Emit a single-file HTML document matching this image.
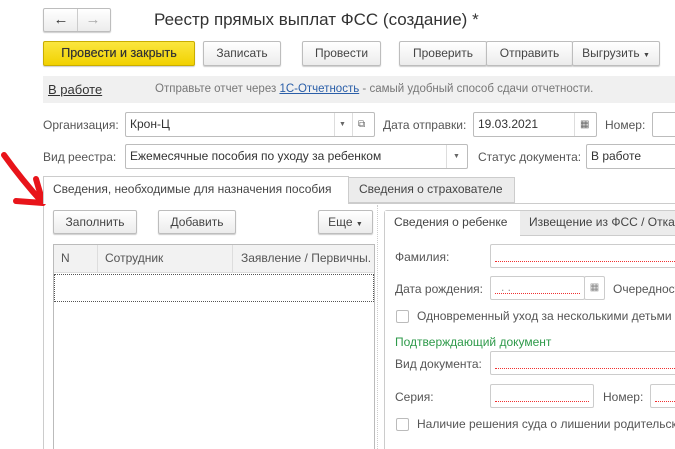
<!DOCTYPE html><html><head><meta charset="utf-8"><style>
*{box-sizing:border-box;margin:0;padding:0}
html,body{width:675px;height:449px;overflow:hidden}
body{background:#fff;font-family:"Liberation Sans",sans-serif;font-size:12px;color:#333;position:relative}
.a{position:absolute;white-space:nowrap}
.btn{position:absolute;border:1px solid #bdbdbd;border-radius:2px;background:linear-gradient(#fff,#ececec);box-shadow:0 1px 1px #ccc;text-align:center;line-height:22px;color:#444}
.inp{position:absolute;border:1px solid #bcbcbc;border-radius:2px;background:#fff;height:25px;line-height:23px;padding-left:4px;color:#333}
.req{position:absolute;border:1px solid #ccc;border-radius:2px;background:#fff;height:24px}
.req:after{content:"";position:absolute;left:4px;right:4px;bottom:5px;border-bottom:1px dotted #f03030}
.lbl{position:absolute;color:#555;white-space:nowrap}
.cb{position:absolute;width:13px;height:13px;border:1px solid #bbb;border-radius:2px;background:#fff}
</style></head><body>
<div class="btn" style="left:43px;top:8px;width:68px;height:24px;line-height:20px;font-size:15px"><span style="color:#333">&#8592;</span><span style="display:inline-block;width:1px;height:22px;background:#ccc;vertical-align:middle;margin:0 8px"></span><span style="color:#aaa">&#8594;</span></div>
<div class="a" style="left:154px;top:10px;font-size:17px;color:#333">Реестр прямых выплат ФСС (создание) *</div>

<div class="btn" style="left:43px;top:41px;width:152px;height:25px;background:linear-gradient(#fbe63f,#f1d100);border-color:#c9ad00;color:#333;font-size:12.5px;text-shadow:0 0 0.4px #333">Провести и закрыть</div>
<div class="btn" style="left:203px;top:41px;width:78px;height:25px">Записать</div>
<div class="btn" style="left:302px;top:41px;width:79px;height:25px">Провести</div>
<div class="btn" style="left:399px;top:41px;width:88px;height:25px">Проверить</div>
<div class="btn" style="left:486px;top:41px;width:87px;height:25px">Отправить</div>
<div class="btn" style="left:572px;top:41px;width:88px;height:25px">Выгрузить <span style="font-size:7px">&#9660;</span></div>

<div class="a" style="left:43px;top:76px;width:632px;height:27px;background:#f0f0f0"></div>
<div class="a" style="left:48px;top:82px;font-size:13px;color:#333;text-decoration:underline">В работе</div>
<div class="a" style="left:155px;top:83px;color:#777;font-size:11.5px">Отправьте отчет через <span style="color:#2a5ea8;text-decoration:underline">1С-Отчетность</span> - самый удобный способ сдачи отчетности.</div>

<div class="lbl" style="left:43px;top:118px">Организация:</div>
<div class="inp" style="left:125px;top:112px;width:250px">Крон-Ц<span style="position:absolute;left:208px;top:0;width:1px;height:23px;background:#ddd"></span><span style="position:absolute;left:213px;font-size:7px;color:#666">&#9660;</span><span style="position:absolute;left:226px;top:0;width:1px;height:23px;background:#ddd"></span><span style="position:absolute;left:232px;font-size:10px;color:#666">&#10697;</span></div>
<div class="lbl" style="left:383px;top:118px">Дата отправки:</div>
<div class="inp" style="left:473px;top:112px;width:124px">19.03.2021<span style="position:absolute;left:100px;top:0;width:1px;height:23px;background:#ddd"></span><span style="position:absolute;left:106px;font-size:10px;color:#666">&#9638;</span></div>
<div class="lbl" style="left:605px;top:118px">Номер:</div>
<div class="inp" style="left:652px;top:112px;width:40px"></div>

<div class="lbl" style="left:43px;top:150px">Вид реестра:</div>
<div class="inp" style="left:125px;top:144px;width:343px">Ежемесячные пособия по уходу за ребенком<span style="position:absolute;left:320px;top:0;width:1px;height:23px;background:#ddd"></span><span style="position:absolute;left:327px;font-size:7px;color:#666">&#9660;</span></div>
<div class="lbl" style="left:478px;top:150px">Статус документа:</div>
<div class="inp" style="left:586px;top:144px;width:100px">В работе</div>

<div class="a" style="left:348px;top:177px;width:167px;height:26px;background:#ececec;border:1px solid #ccc;line-height:22px;padding-left:10px;color:#444">Сведения о страхователе</div>
<div class="a" style="left:43px;top:176px;width:306px;height:28px;background:#fff;border:1px solid #ccc;border-bottom:none;line-height:24px;padding-left:9px;color:#444;z-index:2">Сведения, необходимые для назначения пособия</div>
<div class="a" style="left:43px;top:203px;width:640px;height:260px;border-left:1px solid #ccc;border-top:1px solid #ccc"></div>

<div class="btn" style="left:53px;top:210px;width:84px;height:24px">Заполнить</div>
<div class="btn" style="left:158px;top:210px;width:78px;height:24px">Добавить</div>
<div class="btn" style="left:318px;top:210px;width:55px;height:24px">Еще <span style="font-size:7px">&#9660;</span></div>
<div class="a" style="left:377px;top:205px;width:1px;height:244px;border-left:1px dotted #ccc"></div>

<div class="a" style="left:53px;top:244px;width:322px;height:220px;border:1px solid #bbb"></div>
<div class="a" style="left:54px;top:245px;width:320px;height:28px;background:#f2f2f2;border-bottom:1px solid #ddd"></div>
<div class="a" style="left:97px;top:245px;width:1px;height:28px;background:#ddd"></div>
<div class="a" style="left:232px;top:245px;width:1px;height:28px;background:#ddd"></div>
<div class="a" style="left:61px;top:251px;color:#555">N</div>
<div class="a" style="left:105px;top:251px;color:#555">Сотрудник</div>
<div class="a" style="left:241px;top:251px;color:#555;width:132px;overflow:hidden">Заявление / Первичны.</div>
<div class="a" style="left:54px;top:274px;width:320px;height:28px;border:1px dotted #555"></div>

<div class="a" style="left:384px;top:210px;width:300px;height:250px;border:1px solid #ccc;border-radius:3px"></div>
<div class="a" style="left:519px;top:210px;width:170px;height:26px;background:#ececec;border:1px solid #ccc;line-height:23px;padding-left:9px;color:#444">Извещение из ФСС / Отказ</div>
<div class="a" style="left:385px;top:211px;width:135px;height:26px;background:#fff;line-height:23px;padding-left:9px;color:#444">Сведения о ребенке</div>

<div class="lbl" style="left:395px;top:250px">Фамилия:</div>
<div class="req" style="left:490px;top:244px;width:200px"></div>
<div class="lbl" style="left:395px;top:282px">Дата рождения:</div>
<div class="req" style="left:490px;top:276px;width:95px"><span style="position:absolute;left:10px;top:3px;color:#999">. .</span></div>
<div class="a" style="left:584px;top:276px;width:21px;height:24px;border:1px solid #ccc;border-radius:2px;font-size:10px;color:#888;text-align:center;line-height:22px">&#9638;</div>
<div class="lbl" style="left:613px;top:282px">Очередность</div>
<div class="cb" style="left:396px;top:310px"></div>
<div class="lbl" style="left:417px;top:309px">Одновременный уход за несколькими детьми</div>
<div class="lbl" style="left:395px;top:335px;color:#2e9a4a">Подтверждающий документ</div>
<div class="lbl" style="left:395px;top:357px">Вид документа:</div>
<div class="req" style="left:490px;top:351px;width:200px"></div>
<div class="lbl" style="left:395px;top:390px">Серия:</div>
<div class="req" style="left:490px;top:384px;width:104px"></div>
<div class="lbl" style="left:603px;top:390px">Номер:</div>
<div class="req" style="left:650px;top:384px;width:40px"></div>
<div class="cb" style="left:396px;top:418px"></div>
<div class="lbl" style="left:417px;top:417px">Наличие решения суда о лишении родительских</div>

<svg class="a" style="left:0;top:145px" width="60" height="70"><g stroke="#e8141a" stroke-width="6" fill="none" stroke-linecap="round" stroke-linejoin="round"><path d="M4 10 Q22 35 42 57"/><path d="M36 34 L43 58 L16 56"/></g></svg>
</body></html>
